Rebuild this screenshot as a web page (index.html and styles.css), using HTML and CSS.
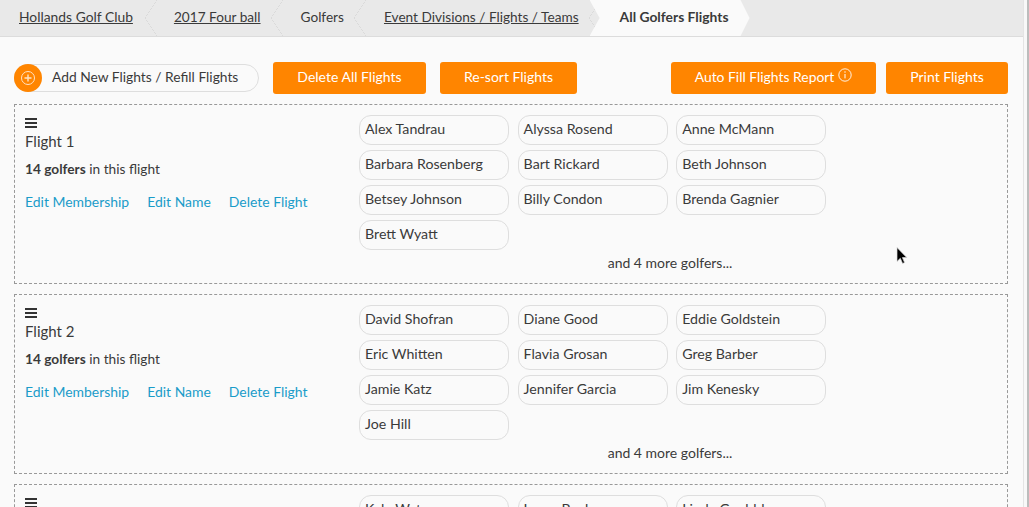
FILE: index.html
```html
<!DOCTYPE html>
<html lang="en">
<head>
<meta charset="utf-8">
<title>All Golfers Flights</title>
<link rel="stylesheet" href="styles.css">
</head>
<body>
<div class="page">
  <nav class="crumbs">
    <a class="crumb crumb-link crumb-first">Hollands Golf Club</a>
    <a class="crumb crumb-link crumb-second">2017 Four ball</a>
    <span class="crumb">Golfers</span>
    <a class="crumb crumb-link">Event Divisions / Flights / Teams</a>
    <span class="crumb crumb-current">All Golfers Flights</span>
  </nav>
  <main class="content">
    <div class="toolbar">
      <button class="add-pill"><span class="add-icon"><svg viewBox="0 0 16 16" width="16" height="16"><circle cx="8" cy="8" r="6.5" fill="none" stroke="#ffe3c4" stroke-width="1"/><path d="M8 4.5v7M4.5 8h7" stroke="#ffe3c4" stroke-width="1.4"/></svg></span><span class="add-label">Add New Flights / Refill Flights</span></button>
      <button class="btn btn-delete">Delete All Flights</button>
      <button class="btn btn-resort">Re-sort Flights</button>
      <button class="btn btn-auto">Auto Fill Flights Report<svg class="info" viewBox="0 0 14 14" width="14" height="14"><circle cx="7" cy="7" r="6.2" fill="none" stroke="#fff" stroke-width="0.9"/><path d="M7 6v4.4" stroke="#fff" stroke-width="1"/><circle cx="7" cy="4" r="0.7" fill="#fff"/></svg></button>
      <button class="btn btn-print">Print Flights</button>
    </div>

    <section class="flight">
      <div class="flight-info">
        <div class="handle"><i></i><i></i><i></i></div>
        <h2 class="flight-name">Flight 1</h2>
        <p class="flight-count"><b>14 golfers</b> in this flight</p>
        <div class="flight-links"><a>Edit Membership</a><a>Edit Name</a><a>Delete Flight</a></div>
      </div>
      <div class="flight-golfers">
        <div class="chips">
          <div class="chip">Alex Tandrau</div><div class="chip">Alyssa Rosend</div><div class="chip">Anne McMann</div>
          <div class="chip">Barbara Rosenberg</div><div class="chip">Bart Rickard</div><div class="chip">Beth Johnson</div>
          <div class="chip">Betsey Johnson</div><div class="chip">Billy Condon</div><div class="chip">Brenda Gagnier</div>
          <div class="chip">Brett Wyatt</div>
        </div>
        <p class="more">and 4 more golfers...</p>
      </div>
    </section>

    <section class="flight">
      <div class="flight-info">
        <div class="handle"><i></i><i></i><i></i></div>
        <h2 class="flight-name">Flight 2</h2>
        <p class="flight-count"><b>14 golfers</b> in this flight</p>
        <div class="flight-links"><a>Edit Membership</a><a>Edit Name</a><a>Delete Flight</a></div>
      </div>
      <div class="flight-golfers">
        <div class="chips">
          <div class="chip">David Shofran</div><div class="chip">Diane Good</div><div class="chip">Eddie Goldstein</div>
          <div class="chip">Eric Whitten</div><div class="chip">Flavia Grosan</div><div class="chip">Greg Barber</div>
          <div class="chip">Jamie Katz</div><div class="chip">Jennifer Garcia</div><div class="chip">Jim Kenesky</div>
          <div class="chip">Joe Hill</div>
        </div>
        <p class="more">and 4 more golfers...</p>
      </div>
    </section>

    <section class="flight">
      <div class="flight-info">
        <div class="handle"><i></i><i></i><i></i></div>
      </div>
      <div class="flight-golfers">
        <div class="chips">
          <div class="chip">Kyle Watrous</div><div class="chip">Laura Beck</div><div class="chip">Linda Goebble</div>
        </div>
      </div>
    </section>
  </main>
  <svg class="cursor" width="12" height="18" viewBox="0 0 12 18"><path d="M1 0.5v14l3.3-3.2 2.3 5.2 2-.9-2.2-5h4.4z" fill="#000" stroke="#ddd" stroke-width="0.7"/></svg>
</div>
<div class="rail"></div>
</body>
</html>
```
FILE: styles.css
```css
* { box-sizing: border-box; }
html, body { margin: 0; height: 100%; overflow: hidden; }
body { display: flex; background: #fafafa; font-family: "Lato", "Liberation Sans", sans-serif; font-size: 14px; color: #3a3a3a; }
.page { position: relative; flex: none; height: 507px; overflow: hidden; border-right: 1px solid #e4e4e4; width: 1024px; }
.rail { flex: 1; background: #f8f8f8; border-right: 2px solid #bcbcbc; }
.crumbs { display: flex; height: 37px; background: #e9e9e9; border-bottom: 1px solid #dcdcdc; align-items: stretch; font-size: 13.65px; }
.crumb { position: relative; display: flex; align-items: center; height: 36px; padding: 0 22px 3px 18px; color: #3a3a3a; }
.crumb-first { padding: 0 24px 3px 19px; font-size: 13.85px; }
.crumb-second { padding-left: 17px; }
.crumb-link { text-decoration: underline; }
.crumb::after { content: ""; position: absolute; right: 0; top: 0; width: 12px; height: 36px; background: linear-gradient(to top right, transparent 48%, #dadada 48%, #dadada 52%, transparent 52%) bottom / 100% 50% no-repeat, linear-gradient(to bottom right, transparent 48%, #dadada 48%, #dadada 52%, transparent 52%) top / 100% 50% no-repeat; }
.crumb-current { background: #fafafa; font-weight: 700; margin-left: -11px; clip-path: polygon(0 0, calc(100% - 9px) 0, 100% 50%, calc(100% - 9px) 100%, 0 100%, 10px 50%); padding: 0 21px 3px 30px; font-size: 13.85px; }
.crumb-current::after { display: none; }
.content { padding: 25px 15px 0 14px; }
.toolbar { display: flex; align-items: center; height: 32px; margin-bottom: 10px; }
button { font: inherit; border: 0; cursor: pointer; }
.add-pill { display: flex; align-items: center; width: 245px; height: 28px; padding: 0; border: 1px solid #dedede; border-radius: 14px; background: #fafafa; color: #3a3a3a; margin-right: 14px; font-size: 13.8px; }
.add-icon { width: 28px; height: 28px; border-radius: 50%; background: #ff8500; display: flex; align-items: center; justify-content: center; margin-left: -1px; flex: none; }
.add-label { margin-left: 10px; padding-bottom: 3px; }
.btn { height: 32px; background: #ff8500; color: #fff; border-radius: 3px; padding: 0 0 3px; display: flex; align-items: center; justify-content: center; gap: 4px; }
.btn-delete { width: 153px; margin-right: 14px; }
.btn-resort { width: 137px; margin-right: auto; }
.btn-auto { width: 205px; margin-right: 10px; font-size: 13.9px; }
.btn-print { width: 122px; }
.info { margin-top: -3px; }
.flight { display: flex; height: 180px; margin-bottom: 10px; border: 1px dashed #999; padding: 10px; }
.flight-info { width: 334px; flex: none; }
.handle { display: flex; flex-direction: column; gap: 2px; width: 12px; margin-top: 3px; }
.handle i { height: 2px; background: #333; display: block; }
.flight-name { margin: 2px 0 0; font-size: 15px; font-weight: 400; line-height: 22px; }
.flight-count { margin: 7px 0 0; font-size: 13.7px; line-height: 20px; }
.flight-links { display: flex; gap: 18px; margin-top: 13px; color: #1a9cc9; line-height: 20px; font-size: 13.95px; }
.flight-golfers { width: 622px; }
.chips { display: grid; grid-template-columns: repeat(3, 150px); column-gap: 8.6px; row-gap: 5px; }
.chip { height: 30px; border: 1px solid #dedede; border-radius: 12px; padding: 0 5px; line-height: 26px; background: #fafafa; font-size: 14.2px; }
.more { margin: 3px 0 0; text-align: center; line-height: 20px; font-size: 14px; }
.cursor { position: absolute; left: 896px; top: 247px; }
```
